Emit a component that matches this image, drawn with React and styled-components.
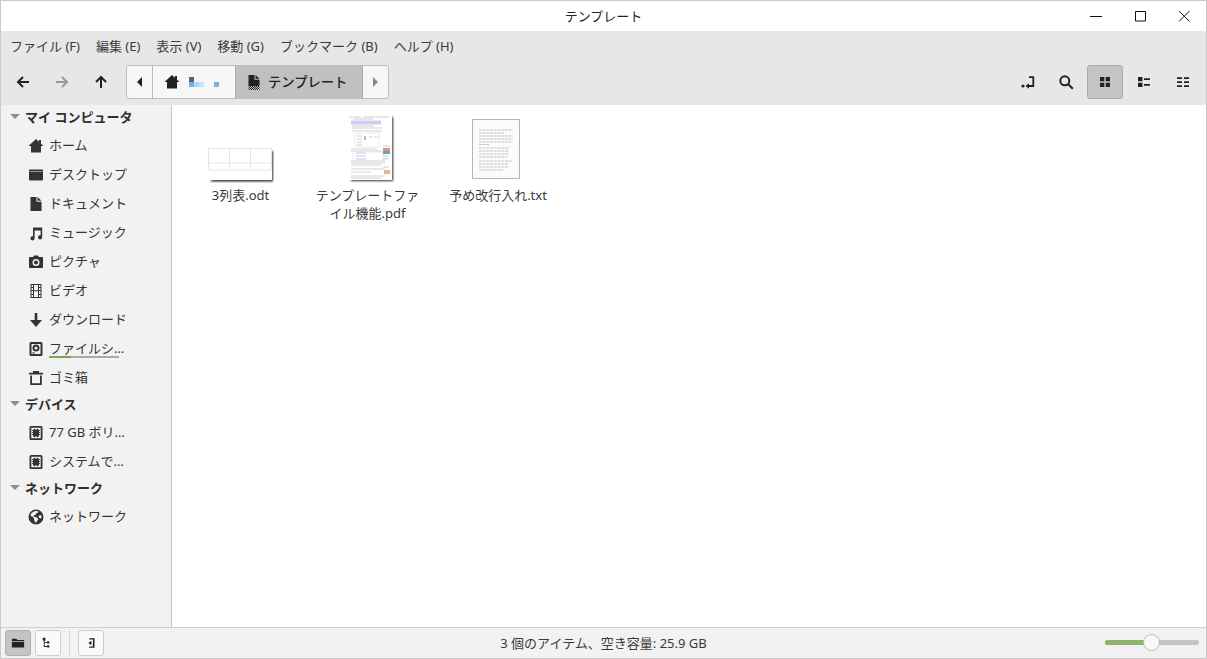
import React from "react";
import styled, { createGlobalStyle } from "styled-components";

const GlobalStyle = createGlobalStyle`
  html, body {
    margin: 0;
    height: 100%;
    overflow: hidden;
    background: #fff;
  }
  * {
    box-sizing: border-box;
  }
`;

const line = { fill: "none", stroke: "currentColor", strokeWidth: 2 };

const icons = {
  back: <path d="M8 3 3 8l5 5M3.5 8H14" {...line} />,
  forward: <path d="m8 3 5 5-5 5M12.5 8H2" {...line} />,
  up: <path d="M3 8l5-5 5 5M8 3.5V14" {...line} />,
  home: <path d="M8 1 .5 8H3v6.500h10V8h2.500L13 5.700V2h-2v1.800z" />,
  file: <path d="M2.500 1h6v4.800h5V15h-11zM9.500 1l4 3.800h-4z" />,
  fileDither: (
    <>
      <defs>
        <pattern id="dither" width="2" height="2" patternUnits="userSpaceOnUse">
          <rect width="1" height="1" />
          <rect x="1" y="1" width="1" height="1" />
        </pattern>
      </defs>
      <path d="M2.500 1h6v4.800h5V12h-11zM9.500 1l4 3.800h-4z" />
      <rect x="2.500" y="12" width="11" height="4" fill="url(#dither)" />
    </>
  ),
  desktop: <path fillRule="evenodd" d="M2 2.500h12a1 1 0 0 1 1 1v9a1 1 0 0 1-1 1H2a1 1 0 0 1-1-1v-9a1 1 0 0 1 1-1zM1.500 4.600v.5h13v-.5z" />,
  music: <path d="M5 2.500h9.200v9.800a2.100 2.100 0 1 1-1.600-2V5.500H6.600v7.800a2.100 2.100 0 1 1-1.600-2z" />,
  camera: <path fillRule="evenodd" d="M5 3 6 1.500h4L11 3h3a1 1 0 0 1 1 1v9a1 1 0 0 1-1 1H2a1 1 0 0 1-1-1V4a1 1 0 0 1 1-1zm3 2a3.500 3.500 0 1 0 0 7 3.500 3.500 0 0 0 0-7zm0 1.500a2 2 0 1 1 0 4 2 2 0 0 1 0-4z" />,
  video: <path fillRule="evenodd" d="M2.500 1h11v14h-11zM3.500 2v2h1.500V2zm0 3v2h1.500V5zm0 3v3h1.500V8zm0 4v2h1.500v-2zM6 2v5.200h4V2zm0 6.300V14h4V8.300zM11 2v2h1.500V2zm0 3v2h1.500V5zm0 3v3h1.500V8zm0 4v2h1.500v-2z" />,
  download: <path d="M6.700 1h2.600v7H14l-6 7-6-7h4.700z" />,
  disk: <path fillRule="evenodd" d="M3 1h10a1.500 1.500 0 0 1 1.500 1.500v11A1.500 1.500 0 0 1 13 15H3a1.500 1.500 0 0 1-1.500-1.500v-11A1.500 1.500 0 0 1 3 1zm.500 2v10h9V3zM8 3.500a3.500 3.500 0 1 1 0 7 3.500 3.500 0 0 1 0-7zM8 5.500a1.500 1.500 0 1 0 0 3 1.500 1.500 0 0 0 0-3zM4.500 11.200h2v1.300h-2z" />,
  trash: <path fillRule="evenodd" d="M5 1h6v1.700h4V4.500H1V2.700h4zM2.200 5.500H4V13.200h8V5.500h1.800V15H2.200z" />,
  chip: <path fillRule="evenodd" d="M3 1h10a1.500 1.500 0 0 1 1.500 1.500v11A1.500 1.500 0 0 1 13 15H3a1.500 1.500 0 0 1-1.500-1.500v-11A1.500 1.500 0 0 1 3 1zm.300 1.800v10.400h9.400V2.800zM5 4.500h6v7H5zM4.200 5h.8v1h-.8zm0 2h.8v1h-.8zm0 2h.8v1h-.8zm6.800-4h.8v1H11zm0 2h.8v1H11zm0 2h.8v1H11zM6 3.800h1v.7H6zm3 0h1v.7H9zM6 11.500h1v.7H6zm3 0h1v.7H9z" />,
  globe: <path fillRule="evenodd" d="M8 .500a7.500 7.500 0 1 1 0 15 7.500 7.500 0 0 1 0-15zM5 3 3 4.500 2.500 7l2 .500 1.500 2 .500 2.500L8 14l1-2 1.500-2L8 8 6 8l-.500-1.500L7.500 6 8 4.500 9.500 4l1-1.500A6 6 0 0 0 7 2zm8 3-2 .500L10.500 8l2 1.500 1-.500a6 6 0 0 0-.500-3z" />,
  jump: (
    <>
      <path d="M10 3.200h4.300V12H8.500" fill="none" stroke="currentColor" strokeWidth="1.800" />
      <path d="M10 9.200v5.600L6.500 12z" />
      <circle cx="4" cy="12" r="1.600" />
    </>
  ),
  search: (
    <>
      <circle cx="6.800" cy="6.800" r="4.500" {...line} />
      <path d="M10.200 10.200 14.800 14.800" {...line} />
    </>
  ),
  grid: <path d="M3 3h4.300v4.300H3zM8.700 3H13v4.300H8.700zM3 8.700h4.300V13H3zM8.700 8.700H13V13H8.700z" />,
  compact: <path d="M2 3h4.500v4.300H2zM2 8.700h4.500V13H2zM8 4.300h6v1.800H8zM8 10h6v1.800H8z" />,
  list: <path d="M2 3.300h5V5H2zM2 7.300h5V9H2zM2 11.300h5V13H2zM9 3.300h5V5H9zM9 7.300h5V9H9zM9 11.300h5V13H9z" />,
  folder: <path d="M1 3h5l1.500 1.500H15V13H1zM1 6v.800h14V6z" fillRule="evenodd" />,
  tree: <path d="M2 2h3v3H4.200v2H7V6h2.500v2.500H7V8H4.200v3.500H7v-1h2.500V13H7v-.500H3.200V5H2z" />,
  panel: <path fillRule="evenodd" d="M6 2.500h6v11H6V12h4.200V4H6zM8.500 5.500v5L5 8z" />,
};

const Icon = ({ name, size = 16 }) => (
  <IconSvg viewBox="0 0 16 16" $size={size} aria-hidden="true">
    {icons[name]}
  </IconSvg>
);

const IconSvg = styled.svg`
  width: ${(p) => p.$size}px;
  height: ${(p) => p.$size}px;
  fill: currentColor;
  flex: none;
  display: block;
`;

const places = [
  {
    title: "マイ コンピュータ",
    items: [
      { icon: "home", label: "ホーム" },
      { icon: "desktop", label: "デスクトップ" },
      { icon: "file", label: "ドキュメント" },
      { icon: "music", label: "ミュージック" },
      { icon: "camera", label: "ピクチャ" },
      { icon: "video", label: "ビデオ" },
      { icon: "download", label: "ダウンロード" },
      { icon: "disk", label: "ファイルシ…", usage: 31 },
      { icon: "trash", label: "ゴミ箱" },
    ],
  },
  {
    title: "デバイス",
    items: [
      { icon: "chip", label: "77 GB ボリ…" },
      { icon: "chip", label: "システムで…" },
    ],
  },
  {
    title: "ネットワーク",
    items: [{ icon: "globe", label: "ネットワーク" }],
  },
];

const menus = ["ファイル (F)", "編集 (E)", "表示 (V)", "移動 (G)", "ブックマーク (B)", "ヘルプ (H)"];

const App = () => {
  return (
    <Window>
      <GlobalStyle />
      <TitleBar>
        <Title>テンプレート</Title>
        <WindowButtons>
          <WinBtn>
            <svg width="16" height="16" viewBox="0 0 16 16">
              <path d="M2 8.500h12" stroke="#111" fill="none" />
            </svg>
          </WinBtn>
          <WinBtn>
            <svg width="16" height="16" viewBox="0 0 16 16">
              <path d="M3.500 3.500h10v9.500h-10z" stroke="#111" fill="none" />
            </svg>
          </WinBtn>
          <WinBtn>
            <svg width="16" height="16" viewBox="0 0 16 16">
              <path d="m3 3 10.500 10.500M13.500 3 3 13.500" stroke="#111" fill="none" />
            </svg>
          </WinBtn>
        </WindowButtons>
      </TitleBar>

      <MenuBar>
        {menus.map((m) => (
          <MenuItem key={m}>{m}</MenuItem>
        ))}
      </MenuBar>

      <Toolbar>
        <NavBtn>
          <Icon name="back" />
        </NavBtn>
        <NavBtn $disabled>
          <Icon name="forward" />
        </NavBtn>
        <NavBtn>
          <Icon name="up" />
        </NavBtn>
        <PathBar>
          <PathArrow>
            <ArrowLeft />
          </PathArrow>
          <PathHome>
            <Icon name="home" />
            <Redacted>
              <svg width="30" height="10" viewBox="0 0 30 10">
                <rect x="0" y="0" width="5" height="5" fill="#7d5a48" />
                <rect x="0" y="5" width="5" height="5" fill="#6fb4ea" />
                <rect x="5" y="5" width="5" height="5" fill="#a8dcf6" />
                <rect x="10" y="5" width="5" height="5" fill="#bfe6fa" />
                <rect x="25" y="5" width="5" height="5" fill="#7cb4dc" />
              </svg>
            </Redacted>
          </PathHome>
          <PathCurrent>
            <Icon name="fileDither" />
            <PathText>テンプレート</PathText>
          </PathCurrent>
          <PathArrow $right>
            <ArrowRight />
          </PathArrow>
        </PathBar>
        <ToolRight>
          <ViewBtn>
            <Icon name="jump" />
          </ViewBtn>
          <ViewBtn>
            <Icon name="search" />
          </ViewBtn>
          <ViewBtn $active>
            <Icon name="grid" />
          </ViewBtn>
          <ViewBtn>
            <Icon name="compact" />
          </ViewBtn>
          <ViewBtn>
            <Icon name="list" />
          </ViewBtn>
        </ToolRight>
      </Toolbar>

      <Body>
        <Sidebar>
          {places.map((group) => (
            <React.Fragment key={group.title}>
              <GroupHead>
                <Caret />
                {group.title}
              </GroupHead>
              {group.items.map((item) => (
                <Place key={item.label}>
                  <Icon name={item.icon} />
                  <PlaceLabel>
                    {item.label}
                    {item.usage && (
                      <UsageBar>
                        <UsageFill style={{ width: `${item.usage}%` }} />
                      </UsageBar>
                    )}
                  </PlaceLabel>
                </Place>
              ))}
            </React.Fragment>
          ))}
        </Sidebar>

        <Files>
          <FileItem>
            <Thumb>
              <OdtThumb />
            </Thumb>
            <FileName>3列表.odt</FileName>
          </FileItem>
          <FileItem>
            <Thumb>
              <PdfThumb />
            </Thumb>
            <FileName>テンプレートファイル機能.pdf</FileName>
          </FileItem>
          <FileItem $wide>
            <Thumb>
              <TxtThumb />
            </Thumb>
            <FileName>予め改行入れ.txt</FileName>
          </FileItem>
        </Files>
      </Body>

      <StatusBar>
        <StatusLeft>
          <StatusBtn $active>
            <Icon name="folder" size={14} />
          </StatusBtn>
          <StatusBtn>
            <Icon name="tree" size={14} />
          </StatusBtn>
          <StatusSep />
          <StatusBtn>
            <Icon name="panel" size={14} />
          </StatusBtn>
        </StatusLeft>
        <StatusText>3 個のアイテム、空き容量: 25.9 GB</StatusText>
        <Slider>
          <SliderFill />
          <SliderKnob />
        </Slider>
      </StatusBar>
    </Window>
  );
};

const OdtThumb = () => (
  <svg width="67" height="35" viewBox="-1 0 67 35">
    <defs>
      <filter id="odtshadow" x="-10%" y="-20%" width="120%" height="140%">
        <feGaussianBlur stdDeviation="0.9" />
      </filter>
    </defs>
    <rect x="3" y="3" width="62" height="30.500" fill="#333" filter="url(#odtshadow)" />
    <rect x="0" y="0" width="64" height="32" fill="#fff" />
    <path d="M.5.500h63M.5 15h63M.5 22h63M21.500.500V22M42.500.500V22M.500.500V22M63.500.500V22" stroke="#e4e4e4" fill="none" />
  </svg>
);

const PdfThumb = () => (
  <svg width="56" height="68" viewBox="-8 0 56 68">
    <defs>
      <filter id="pdfblur">
        <feGaussianBlur stdDeviation="0.5" />
      </filter>
      <filter id="pdfshadow" x="-20%" y="-10%" width="140%" height="120%">
        <feGaussianBlur stdDeviation="0.9" />
      </filter>
    </defs>
    <rect x="3" y="2" width="42" height="64" fill="#333" filter="url(#pdfshadow)" />
    <rect x="0" y="0" width="44" height="65" fill="#fff" />
    <g filter="url(#pdfblur)">
      <path d="M1 2h12M15 2h26M5 4h20" stroke="#b9b9c4" strokeWidth=".7" />
      <rect x="3" y="5.500" width="30" height="4" fill="#d8c8f0" />
      <path d="M4 11h22M4 13h30M4 16h30" stroke="#bdbdc6" strokeWidth=".7" />
      <rect x="7" y="18" width="24" height="14" fill="none" stroke="#dcdcdc" strokeWidth=".5" />
      <rect x="16" y="21" width="2" height="4" fill="#9ad49a" />
      <path d="M9 21h5M9 24h5M9 27h5M9 30h5M21 22h3M26 22h3M30 22h1" stroke="#b5b5bc" strokeWidth=".7" />
      <path d="M3 34h26M3 36h30M3 46h34M3 48h34M3 50h30M3 54h34M3 57h20M3 61h34M3 63h30" stroke="#c0c0ca" strokeWidth=".7" />
      <path d="M8 38h10M8 41h10M8 44h10" stroke="#a9a9d8" strokeWidth=".7" />
      <rect x="5" y="37" width="30" height="9" fill="none" stroke="#dadada" strokeWidth=".5" />
      <rect x="35" y="33" width="7" height="4" fill="#e8907a" />
      <rect x="35" y="36" width="7" height="3" fill="#63a0c8" />
      <rect x="36" y="55" width="6" height="4" fill="#eeb0a0" />
      <path d="M35 31h6M35 41h6M35 44h6M35 52h6" stroke="#bcbcc6" strokeWidth=".7" />
    </g>
  </svg>
);

const txtLines = [
  [11, 33], [14, 26], [17, 34], [20, 34], [23, 32], [25.500, 10],
  [29, 30], [32, 30], [35, 30], [38, 28],
  [42, 33], [45, 30], [48, 30], [51, 24],
];

const TxtThumb = () => (
  <svg width="52" height="64" viewBox="0 0 52 64">
    <defs>
      <filter id="txtblur">
        <feGaussianBlur stdDeviation="0.35" />
      </filter>
    </defs>
    <rect x=".5" y=".5" width="47" height="59" fill="#fbfbfb" stroke="#b4b4b4" />
    <g filter="url(#txtblur)">
      {txtLines.map(([y, w]) => (
        <path key={y} d={`M7 ${y}h${w}`} stroke="#b4b4b4" strokeWidth=".8" strokeDasharray="3 .7" />
      ))}
    </g>
  </svg>
);

const Window = styled.div`
  width: 1207px;
  height: 659px;
  display: flex;
  flex-direction: column;
  border: 1px solid #c9c9c9;
  font-family: "Noto Sans", "Noto Sans CJK JP", sans-serif;
  font-size: 13px;
  color: #303030;
  background: #fff;
  overflow: hidden;
`;

const TitleBar = styled.div`
  height: 30px;
  flex: none;
  position: relative;
  display: flex;
  align-items: center;
  justify-content: center;
  padding-bottom: 2px;
  background: #fff;
`;

const Title = styled.div`
  color: #222;
  font-size: 13px;
`;

const WindowButtons = styled.div`
  position: absolute;
  right: 0;
  top: 0;
  height: 30px;
  display: flex;
`;

const WinBtn = styled.div`
  width: 44px;
  height: 30px;
  display: flex;
  align-items: center;
  justify-content: center;
`;

const MenuBar = styled.div`
  height: 30px;
  flex: none;
  display: flex;
  align-items: center;
  padding: 0 0 2px 1px;
  background: #e7e7e7;
`;

const MenuItem = styled.div`
  padding: 0 8px;
  color: #3a3a3a;
  white-space: nowrap;
`;

const Toolbar = styled.div`
  height: 44px;
  flex: none;
  display: flex;
  align-items: flex-start;
  padding: 4px 5px 0 2.500px;
  background: #e7e7e7;
`;

const NavBtn = styled.div`
  width: 39px;
  height: 34px;
  display: flex;
  align-items: center;
  justify-content: center;
  color: ${(p) => (p.$disabled ? "#9a9a9a" : "#222")};
`;

const PathBar = styled.div`
  height: 34px;
  margin-left: 5.500px;
  display: flex;
  border: 1px solid #bdbdbd;
  border-radius: 3px;
  background: #f7f7f7;
  overflow: hidden;
`;

const PathArrow = styled.div`
  width: ${(p) => (p.$right ? "25px" : "26px")};
  display: flex;
  align-items: center;
  justify-content: center;
  border-right: ${(p) => (p.$right ? "none" : "1px solid #bdbdbd")};
`;

const ArrowLeft = styled.div`
  border-top: 5px solid transparent;
  border-bottom: 5px solid transparent;
  border-right: 5px solid #222;
`;

const ArrowRight = styled.div`
  border-top: 5px solid transparent;
  border-bottom: 5px solid transparent;
  border-left: 5px solid #8a8a8a;
`;

const PathHome = styled.div`
  width: 82px;
  display: flex;
  align-items: center;
  padding-left: 11px;
  color: #222;
`;

const Redacted = styled.div`
  margin-left: 9px;
  display: flex;
`;

const PathCurrent = styled.div`
  width: 128px;
  display: flex;
  align-items: center;
  gap: 6px;
  padding-left: 10px;
  background: #c0c0c0;
  border-left: 1px solid #ababab;
  border-right: 1px solid #ababab;
  color: #222;
`;

const PathText = styled.span`
  font-weight: 500;
  font-size: 13.300px;
  margin-top: -2px;
`;

const ToolRight = styled.div`
  margin-left: auto;
  display: flex;
  gap: 3px;
`;

const ViewBtn = styled.div`
  width: 36px;
  height: 34px;
  display: flex;
  align-items: center;
  justify-content: center;
  color: #222;
  border-radius: 3px;
  border: 1px solid ${(p) => (p.$active ? "#ababab" : "transparent")};
  background: ${(p) => (p.$active ? "#c4c4c4" : "transparent")};
`;

const Body = styled.div`
  flex: 1;
  min-height: 0;
  display: flex;
`;

const Sidebar = styled.div`
  width: 171px;
  flex: none;
  background: #f2f2f2;
  border-right: 1px solid #c4c4c4;
`;

const GroupHead = styled.div`
  height: 26px;
  display: flex;
  align-items: center;
  padding: 0 0 3px 9px;
  font-weight: 700;
  color: #2e2e2e;
  white-space: nowrap;
`;

const Caret = styled.span`
  width: 0;
  height: 0;
  margin-right: 5px;
  border-left: 5px solid transparent;
  border-right: 5px solid transparent;
  border-top: 5px solid #8e8e8e;
`;

const Place = styled.div`
  height: 29px;
  display: flex;
  align-items: center;
  gap: 5px;
  padding-left: 27px;
  color: #333;
  white-space: nowrap;
`;

const PlaceLabel = styled.div`
  position: relative;
  top: -1px;
`;

const UsageBar = styled.div`
  position: absolute;
  left: 0;
  bottom: -1px;
  width: 70px;
  height: 2px;
  background: #aaa;
`;

const UsageFill = styled.div`
  height: 100%;
  background: #7ca356;
`;

const Files = styled.div`
  flex: 1;
  display: flex;
  align-items: flex-start;
  padding: 10px 0 0 5px;
  background: #fff;
`;

const FileItem = styled.div`
  width: ${(p) => (p.$wide ? "134px" : "127px")};
  display: flex;
  flex-direction: column;
  align-items: center;
`;

const Thumb = styled.div`
  height: 68px;
  display: flex;
  align-items: flex-end;
  justify-content: center;
`;

const FileName = styled.div`
  margin-top: 3px;
  width: 112px;
  text-align: center;
  line-height: 18px;
  color: #3a3a3a;
  word-break: break-all;
`;

const StatusBar = styled.div`
  height: 31px;
  flex: none;
  position: relative;
  display: flex;
  align-items: center;
  justify-content: center;
  padding-bottom: 2px;
  background: #f2f2f2;
  border-top: 1px solid #cfcfcf;
`;

const StatusLeft = styled.div`
  position: absolute;
  left: 4px;
  top: 2px;
  display: flex;
  align-items: center;
  gap: 4px;
`;

const StatusBtn = styled.div`
  width: 26px;
  height: 26px;
  display: flex;
  align-items: center;
  justify-content: center;
  color: #222;
  border-radius: 3px;
  border: 1px solid ${(p) => (p.$active ? "#b0b0b0" : "#cdcdcd")};
  background: ${(p) => (p.$active ? "#c4c4c4" : "#fafafa")};
`;

const StatusSep = styled.div`
  width: 1px;
  height: 26px;
  margin: 0 4px;
  background: #d6d6d6;
`;

const StatusText = styled.div`
  color: #3a3a3a;
`;

const Slider = styled.div`
  position: absolute;
  left: 1104px;
  top: 12px;
  width: 94px;
  height: 5px;
  border-radius: 3px;
  background: #c4c4c4;
`;

const SliderFill = styled.div`
  width: 42px;
  height: 100%;
  border-radius: 3px 0 0 3px;
  background: #8fb36c;
`;

const SliderKnob = styled.div`
  position: absolute;
  left: 38px;
  top: -6px;
  width: 17px;
  height: 17px;
  border-radius: 50%;
  background: #f8f8f8;
  border: 1px solid #bcbcbc;
`;

export default App;
